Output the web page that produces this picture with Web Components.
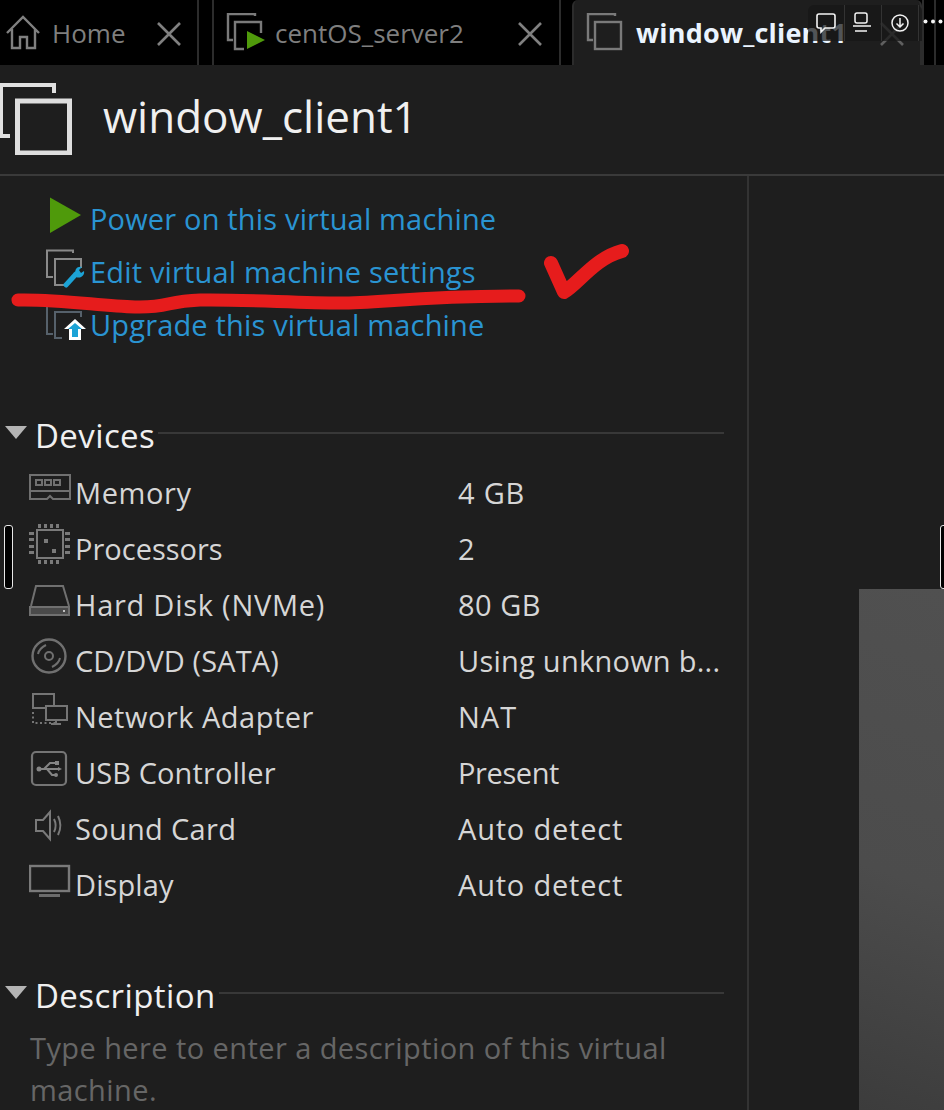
<!DOCTYPE html>
<html>
<head>
<meta charset="utf-8">
<style>
    html, body { margin: 0; height: 100%; background: #1e1e1e; overflow: hidden; }
    body { font-family: "Open Sans", "Noto Sans", sans-serif; }
</style>
</head>
<body>
<vm-page>
    <vm-tabbar slot="tabs">
        <vm-tab icon="home" style="width:199px;--m:5px" closex="156">Home</vm-tab>
        <vm-tab icon="running" style="width:349px;margin-left:13px;--m:12px;--t:2px" closex="303">centOS_server2</vm-tab>
        <vm-tab icon="vm" active style="width:350px;margin-left:11px;--m:12px;--t:3px" closex="305">window_client1</vm-tab>
    </vm-tabbar>
    <vm-title slot="title">window_client1</vm-title>
    <vm-action slot="left" icon="power">Power on this virtual machine</vm-action>
    <vm-action slot="left" icon="edit">Edit virtual machine settings</vm-action>
    <vm-action slot="left" icon="upgrade">Upgrade this virtual machine</vm-action>
    <vm-section slot="left" label="Devices" style="margin-top:57px">
        <vm-device icon="memory" value="4 GB" style="--ll:.6px;--lv:.8px">Memory</vm-device>
        <vm-device icon="cpu" value="2" style="--ll:0px">Processors</vm-device>
        <vm-device icon="disk" value="80 GB" style="--ll:.75px;--lv:.5px">Hard Disk (NVMe)</vm-device>
        <vm-device icon="cd" value="Using unknown b..." style="--ll:.1px;--lv:.25px">CD/DVD (SATA)</vm-device>
        <vm-device icon="net" value="NAT" style="--ll:.5px;--lv:1px">Network Adapter</vm-device>
        <vm-device icon="usb" value="Present" style="--ll:.1px;--lv:-.4px">USB Controller</vm-device>
        <vm-device icon="sound" value="Auto detect" style="--ll:.3px;--lv:.8px">Sound Card</vm-device>
        <vm-device icon="display" value="Auto detect" style="--ll:.1px;--lv:.8px">Display</vm-device>
    </vm-section>
    <vm-section slot="left" label="Description" style="margin-top:56px">
        <vm-note>Type here to enter a description of this virtual machine.</vm-note>
    </vm-section>
</vm-page>
<vm-overlay></vm-overlay>

<script>
// icones desenhados a mao, cada um no seu viewBox
const ICONES = {
    home: `<svg width="36" height="36" viewBox="0 0 36 36"><path d="M2 18 18 2l16 16M7 14v19h8V22h7v11h8V14" fill="none" stroke="#808080" stroke-width="2.4"/></svg>`,
    running: `<svg width="40" height="40" viewBox="0 0 40 40"><path d="M29 3V1H2v26h5" fill="none" stroke="#7a7a7a" stroke-width="2.4"/><path d="M18 36H9V9h26v11" fill="none" stroke="#7a7a7a" stroke-width="2.4"/><path d="M21 18l18 9-18 9z" fill="#4f9a0b"/></svg>`,
    vm: `<svg width="40" height="40" viewBox="0 0 40 40"><path d="M29 3V1H2v26h5" fill="none" stroke="#7a7a7a" stroke-width="2.4"/><rect x="9" y="9" width="26" height="27" fill="none" stroke="#7a7a7a" stroke-width="2.4"/></svg>`,
    power: `<svg width="46" height="53" viewBox="0 0 46 53"><path d="M5 4.500 36 22 5 40z" fill="#4f9a0b"/></svg>`,
    edit: `<svg width="46" height="53" viewBox="0 0 46 53"><path d="M28 7V4.500H2V31h6" fill="none" stroke="#8a8a8a" stroke-width="2"/><path d="M19 39H10V13h26v9" fill="none" stroke="#8a8a8a" stroke-width="2"/><path d="M21 39 31 28" stroke="#1ca3d6" stroke-width="5" stroke-linecap="round"/><path d="M31 28c-2-4 1-8 6-7l-3 3 2 3 3-2c1 4-3 8-8 6z" fill="#1ca3d6"/></svg>`,
    upgrade: `<svg width="46" height="53" viewBox="0 0 46 53"><path d="M2 8v27h6" fill="none" stroke="#56616b" stroke-width="2"/><path d="M17 39h-7V13h26v5" fill="none" stroke="#56616b" stroke-width="2"/><path d="M30 20l11 10h-5v11H24V30h-5z" fill="#fff"/><path d="M30 24l7 6h-4v8h-6v-8h-4z" fill="#1ca3d6"/></svg>`,
    memory: `<svg width="47" height="56" viewBox="0 0 47 56"><g fill="none" stroke="#707070" stroke-width="2"><path d="M1 11h40v24H24l-3-3-3 3H1z"/><path d="M1 27h40"/><rect x="7" y="16" width="6" height="5"/><rect x="16" y="16" width="6" height="5"/><rect x="25" y="16" width="6" height="5"/></g></svg>`,
    cpu: `<svg width="47" height="56" viewBox="0 0 47 56"><rect x="8" y="10" width="26" height="28" fill="none" stroke="#7a7a7a" stroke-width="2"/><g fill="#7a7a7a"><rect x="15" y="19" width="4" height="4"/><rect x="23" y="29" width="4" height="4"/><path d="M9 4h3v4H9zM15 4h3v4h-3zM21 4h3v4h-3zM27 4h3v4h-3zM9 40h3v4H9zM15 40h3v4h-3zM21 40h3v4h-3zM27 40h3v4h-3zM0 12h5v3H0zM0 18h5v3H0zM0 25h5v3H0zM0 31h5v3H0zM36 12h5v3h-5zM36 18h5v3h-5zM36 25h5v3h-5zM36 31h5v3h-5z"/></g></svg>`,
    disk: `<svg width="47" height="56" viewBox="0 0 47 56"><path d="M2 30 7 10h27l6 20" fill="none" stroke="#707070" stroke-width="2"/><path d="M1 31h39v8H1z" fill="#4a4a4a" stroke="#707070" stroke-width="2"/><rect x="34" y="34" width="2" height="2" fill="#c0c0c0"/></svg>`,
    cd: `<svg width="47" height="56" viewBox="0 0 47 56"><g fill="none" stroke="#707070"><circle cx="20" cy="24" r="16.500" stroke-width="2.400"/><circle cx="20" cy="24" r="4" stroke-width="2"/><path d="M9 22c1-5 4-7 8-9M31 26c-1 5-4 7-8 9" stroke-width="2"/></g></svg>`,
    net: `<svg width="47" height="56" viewBox="0 0 47 56"><g fill="none" stroke="#757575" stroke-width="2"><rect x="4" y="6" width="21" height="14"/><rect x="17" y="18" width="21" height="14" fill="#1e1e1e"/><path d="M27 32v4M22 36h10"/><path d="M4 24v11h24" stroke-dasharray="2 2.500"/></g></svg>`,
    usb: `<svg width="47" height="56" viewBox="0 0 47 56"><rect x="3" y="8" width="34" height="33" rx="4" fill="none" stroke="#757575" stroke-width="2.200"/><g fill="none" stroke="#858585" stroke-width="2"><path d="M9 25h21M15 25l6-6h5M18 25l5 6h3"/></g><g fill="#858585"><circle cx="10" cy="25" r="2.500"/><path d="M26 17h4v4h-4zM29 23l4 2-4 2z"/><circle cx="27" cy="31" r="2"/></g></svg>`,
    sound: `<svg width="47" height="56" viewBox="0 0 47 56"><g fill="none" stroke="#7a7a7a" stroke-width="2"><path d="M7 20h7l7-8v27l-7-8H7z"/><path d="M25 19c2 4 2 9 0 13M29 16c3 6 3 13 0 19"/></g></svg>`,
    display: `<svg width="47" height="56" viewBox="0 0 47 56"><rect x="1" y="10" width="39" height="25" fill="none" stroke="#7a7a7a" stroke-width="2.400"/><rect x="10" y="38" width="21" height="3" fill="#6c6c6c"/></svg>`
};

class VmPage extends HTMLElement {
    constructor() {
        super();
        this.attachShadow({mode: "open"});
        this.shadowRoot.innerHTML = `
        <style>
            :host { display: flex; flex-direction: column; height: 1110px; background: #1e1e1e; color: #d8d8d8; overflow: hidden; }
            .corpo { flex: 1; display: flex; min-height: 0; }
            .esquerda { width: 749px; height: 934px; padding-top: 16px; box-sizing: border-box; border-right: 2px solid #333; overflow: hidden; flex: none; }
            .direita { flex: 1; display: flex; justify-content: flex-end; align-items: flex-end; }
            .painel { width: 85px; height: 521px; background: linear-gradient(200deg, #505050 0%, #4c4c4c 55%, #3c3c3c 100%); }
        </style>
        <slot name="tabs"></slot>
        <slot name="title"></slot>
        <div class="corpo">
            <div class="esquerda"><slot name="left"></slot></div>
            <div class="direita"><div class="painel"></div></div>
        </div>`;
    }
}

class VmTabbar extends HTMLElement {
    constructor() {
        super();
        this.attachShadow({mode: "open"});
        this.shadowRoot.innerHTML = `
        <style>
            :host { display: flex; height: 65px; background: #000; flex: none; }
            .fim { width: 10px; border-left: 2px solid #2c2c2c; border-right: 2px solid #2c2c2c; }
        </style>
        <slot></slot>
        <div class="fim"></div>`;
    }
}

class VmTab extends HTMLElement {
    constructor() {
        super();
        const ativo = this.hasAttribute("active");
        this.attachShadow({mode: "open"});
        this.shadowRoot.innerHTML = `
        <style>
            :host { display: flex; align-items: center; box-sizing: border-box; flex: none; height: 65px; position: relative;
                border-right: 2px solid #2c2c2c; font-size: 26px; color: #7f7f7f; }
            :host([active]) { background: #1e1e1e; color: #eaf4ff; font-weight: 700; font-size: 27px; letter-spacing: .2px; border-left: 2px solid #2c2c2c; border-top-left-radius: 6px; border-top-right-radius: 6px; }
            :host(:not([active]):not(:first-child)) { border-left: 2px solid #2c2c2c; }
            .icone { display: flex; width: 47px; flex: none; justify-content: flex-start; margin-left: var(--m, 14px); }
            .x { position: absolute; left: ${this.getAttribute("closex")}px; top: 21px; }
            span { margin-left: var(--t, 0); white-space: nowrap; }
        </style>
        <div class="icone">${ICONES[this.getAttribute("icon")]}</div>
        <span><slot></slot></span>
        <svg class="x" width="26" height="26" viewBox="0 0 26 26"><path d="M2 2l22 22M24 2 2 24" stroke="${ativo ? "#5f5f5f" : "#808080"}" stroke-width="2.600"/></svg>`;
    }
}

class VmTitle extends HTMLElement {
    constructor() {
        super();
        this.attachShadow({mode: "open"});
        this.shadowRoot.innerHTML = `
        <style>
            :host { display: flex; align-items: center; height: 111px; padding-bottom: 7px; box-sizing: border-box; border-bottom: 2px solid #3a3a3a; flex: none; font-size: 44px; color: #f0f0f0; }
            svg { flex: none; margin-right: 31px; margin-top: 6px; }
        </style>
        <svg width="72" height="72" viewBox="0 0 72 72"><path d="M54 10V2H1v51h9" fill="none" stroke="#e0e0e0" stroke-width="4"/><rect x="17.500" y="18" width="52" height="52" fill="none" stroke="#dedede" stroke-width="5"/></svg>
        <slot></slot>`;
    }
}

class VmAction extends HTMLElement {
    constructor() {
        super();
        this.attachShadow({mode: "open"});
        this.shadowRoot.innerHTML = `
        <style>
            :host { display: flex; align-items: center; height: 53px; padding-left: 45px; font-size: 29px; letter-spacing: .17px; color: #2a94d2; }
            svg { display: block; flex: none; margin-top: 1px; margin-right: -1px; }
            span { white-space: nowrap; }
        </style>
        ${ICONES[this.getAttribute("icon")]}
        <span><slot></slot></span>`;
    }
}

class VmSection extends HTMLElement {
    constructor() {
        super();
        this.attachShadow({mode: "open"});
        this.shadowRoot.innerHTML = `
        <style>
            :host { display: block; }
            .cab { display: flex; align-items: center; height: 56px; width: 724px; font-size: 33px; letter-spacing: .4px; color: #f0f0f0; }
            .seta { width: 0; height: 0; margin: -8px 9px 0 5px; border-left: 11px solid transparent; border-right: 11px solid transparent; border-top: 13px solid #b4b4b4; }
            .linha { flex: 1; height: 2px; background: #383838; margin: -6px 0 0 3px; }
            span { margin: -2px 0 0 -1px; }
        </style>
        <div class="cab"><div class="seta"></div><span>${this.getAttribute("label")}</span><div class="linha"></div></div>
        <slot></slot>`;
    }
}

class VmDevice extends HTMLElement {
    constructor() {
        super();
        this.attachShadow({mode: "open"});
        this.shadowRoot.innerHTML = `
        <style>
            :host { display: grid; grid-template-columns: 46px 383px 1fr; align-items: center; height: 56px; padding-left: 29px; font-size: 29px; color: #d6d6d6; }
            span { white-space: nowrap; }
            .rotulo { letter-spacing: var(--ll, 0); }
            .valor { letter-spacing: var(--lv, 0); }
            svg { display: block; }
        </style>
        ${ICONES[this.getAttribute("icon")]}
        <span class="rotulo"><slot></slot></span>
        <span class="valor">${this.getAttribute("value")}</span>`;
    }
}

class VmNote extends HTMLElement {
    constructor() {
        super();
        this.attachShadow({mode: "open"});
        this.shadowRoot.innerHTML = `
        <style>
            :host { display: block; width: 680px; padding: 3px 0 0 30px; font-size: 29px; letter-spacing: .42px; line-height: 42px; color: #666; }
        </style>
        <slot></slot>`;
    }
}

// coisas que ficam por cima: barra flutuante, alcas e o risco vermelho
class VmOverlay extends HTMLElement {
    constructor() {
        super();
        this.attachShadow({mode: "open"});
        this.shadowRoot.innerHTML = `
        <style>
            :host { position: absolute; left: 0; top: 0; width: 944px; height: 1110px; pointer-events: none; }
            .barra { position: absolute; left: 808px; top: 5px; width: 114px; height: 36px; display: flex; background: rgba(22,22,22,.72); border-radius: 6px 6px 0 0; }
            .barra div { width: 36px; display: flex; align-items: center; justify-content: center; border-right: 1px solid #333; }
            .pontos { position: absolute; left: 923px; top: 19px; }
            .alca { position: absolute; top: 525px; height: 62px; width: 7px; background: #000; border: 1px solid #e8e8e8; border-radius: 3px; }
            .risco { position: absolute; left: 0; top: 0; }
        </style>
        <div class="barra">
            <div><svg width="22" height="22" viewBox="0 0 22 22"><path d="M4 2h14a2 2 0 0 1 2 2v10a2 2 0 0 1-2 2H10l-4 4v-4H4a2 2 0 0 1-2-2V4a2 2 0 0 1 2-2z" fill="none" stroke="#f4f4f4" stroke-width="1.600"/></svg></div>
            <div><svg width="22" height="22" viewBox="0 0 22 22"><rect x="3" y="1" width="12" height="10" rx="2" fill="none" stroke="#f4f4f4" stroke-width="1.500"/><path d="M1 14h18M3 19h12" stroke="#f4f4f4" stroke-width="1.500"/></svg></div>
            <div><svg width="20" height="20" viewBox="0 0 20 20"><circle cx="10" cy="10" r="8" fill="none" stroke="#f4f4f4" stroke-width="1.500"/><path d="M10 5v9M6.500 10.500 10 14l3.500-3.500" fill="none" stroke="#f4f4f4" stroke-width="1.500"/></svg></div>
        </div>
        <svg class="pontos" width="21" height="5" viewBox="0 0 21 5"><g fill="#f4f4f4"><circle cx="2.500" cy="2.500" r="2"/><circle cx="10" cy="2.500" r="2"/><circle cx="17.500" cy="2.500" r="2"/></g></svg>
        <div class="alca" style="left:4px"></div>
        <div class="alca" style="left:940px"></div>
        <svg class="risco" width="944" height="1110" viewBox="0 0 944 1110">
            <g fill="none" stroke="#e61c1c" stroke-linecap="round" stroke-linejoin="round">
                <path d="M18 300C60 299 100 306 135 307S165 301 200 300 300 303 340 303 420 296 519 296" stroke-width="13"/>
                <path d="M551 263 564 292C578 284 595 258 622 251" stroke-width="14"/>
            </g>
        </svg>`;
    }
}

customElements.define("vm-page", VmPage);
customElements.define("vm-tabbar", VmTabbar);
customElements.define("vm-tab", VmTab);
customElements.define("vm-title", VmTitle);
customElements.define("vm-action", VmAction);
customElements.define("vm-section", VmSection);
customElements.define("vm-device", VmDevice);
customElements.define("vm-note", VmNote);
customElements.define("vm-overlay", VmOverlay);
</script>
</body>
</html>
